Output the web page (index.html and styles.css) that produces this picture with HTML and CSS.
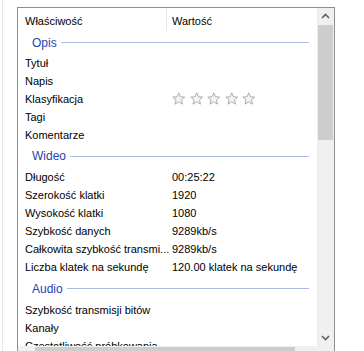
FILE: index.html
```html
<!DOCTYPE html>
<html lang="pl">
<head>
<meta charset="utf-8">
<link rel="stylesheet" href="styles.css">
</head>
<body>
<div class="page">
  <div class="edge"></div>
  <div class="listview">
    <div class="content">
      <div class="colheader">
        <div class="col-name">Właściwość</div>
        <div class="col-value">Wartość</div>
      </div>
      <div class="group"><span class="group-title">Opis</span><span class="group-line"></span></div>
      <div class="row"><div class="name">Tytuł</div><div class="value"></div></div>
      <div class="row"><div class="name">Napis</div><div class="value"></div></div>
      <div class="row"><div class="name">Klasyfikacja</div>
        <div class="value stars">
          <svg class="star" viewBox="0 0 13 13"><path d="M6.5 0.8 L8.1 4.6 L12.2 4.9 L9.1 7.6 L10.1 11.7 L6.5 9.5 L2.9 11.7 L3.9 7.6 L0.8 4.9 L4.9 4.6 Z"/></svg>
          <svg class="star" viewBox="0 0 13 13"><path d="M6.5 0.8 L8.1 4.6 L12.2 4.9 L9.1 7.6 L10.1 11.7 L6.5 9.5 L2.9 11.7 L3.9 7.6 L0.8 4.9 L4.9 4.6 Z"/></svg>
          <svg class="star" viewBox="0 0 13 13"><path d="M6.5 0.8 L8.1 4.6 L12.2 4.9 L9.1 7.6 L10.1 11.7 L6.5 9.5 L2.9 11.7 L3.9 7.6 L0.8 4.9 L4.9 4.6 Z"/></svg>
          <svg class="star" viewBox="0 0 13 13"><path d="M6.5 0.8 L8.1 4.6 L12.2 4.9 L9.1 7.6 L10.1 11.7 L6.5 9.5 L2.9 11.7 L3.9 7.6 L0.8 4.9 L4.9 4.6 Z"/></svg>
          <svg class="star" viewBox="0 0 13 13"><path d="M6.5 0.8 L8.1 4.6 L12.2 4.9 L9.1 7.6 L10.1 11.7 L6.5 9.5 L2.9 11.7 L3.9 7.6 L0.8 4.9 L4.9 4.6 Z"/></svg>
        </div>
      </div>
      <div class="row"><div class="name">Tagi</div><div class="value"></div></div>
      <div class="row"><div class="name">Komentarze</div><div class="value"></div></div>
      <div class="group group-mid"><span class="group-title">Wideo</span><span class="group-line"></span></div>
      <div class="row"><div class="name">Długość</div><div class="value">00:25:22</div></div>
      <div class="row"><div class="name">Szerokość klatki</div><div class="value">1920</div></div>
      <div class="row"><div class="name">Wysokość klatki</div><div class="value">1080</div></div>
      <div class="row"><div class="name">Szybkość danych</div><div class="value">9289kb/s</div></div>
      <div class="row"><div class="name">Całkowita szybkość transmi...</div><div class="value">9289kb/s</div></div>
      <div class="row"><div class="name">Liczba klatek na sekundę</div><div class="value">120.00 klatek na sekundę</div></div>
      <div class="group group-tall"><span class="group-title">Audio</span><span class="group-line"></span></div>
      <div class="row"><div class="name">Szybkość transmisji bitów</div><div class="value"></div></div>
      <div class="row"><div class="name">Kanały</div><div class="value"></div></div>
      <div class="row"><div class="name">Częstotliwość próbkowania</div><div class="value"></div></div>
    </div>
    <div class="vscroll">
      <div class="sbtn"><svg viewBox="0 0 17 17" class="chev"><path d="M5 10 L8.5 6.5 L12 10"/></svg></div>
      <div class="vthumb"></div>
      <div class="vtrack"></div>
      <div class="sbtn"><svg viewBox="0 0 17 17" class="chev"><path d="M5 7 L8.5 10.5 L12 7"/></svg></div>
    </div>
    <div class="hscroll">
      <div class="hbtn"></div>
      <div class="hthumb"></div>
      <div class="htrack"></div>
    </div>
    <div class="corner"></div>
  </div>
</div>
</body>
</html>
```
FILE: styles.css
```css
html, body {
  margin: 0;
  padding: 0;
  background: #ffffff;
  overflow: hidden;
}
body {
  width: 364px;
  height: 351px;
  font-family: "Liberation Sans", Arial, sans-serif;
  font-size: 11px;
  color: #000000;
}
.page {
  display: flex;
  height: 351px;
}
.edge {
  width: 1px;
  margin-left: 2px;
  background: #e6e6e6;
  flex: none;
}
.listview {
  margin-left: 14px;
  margin-top: 7px;
  width: 318px;
  height: 360px;
  border: 1px solid #8c8f94;
  box-sizing: border-box;
  display: grid;
  grid-template-columns: 299px 17px;
  grid-template-rows: 338px 17px;
  flex: none;
}
.content {
  overflow: hidden;
  background: #ffffff;
}
.colheader {
  display: flex;
  height: 23px;
  align-items: stretch;
}
.col-name {
  width: 141px;
  padding-left: 7px;
  border-right: 1px solid #e5e5e5;
  line-height: 20px;
  padding-top: 3px;
}
.col-value {
  padding-left: 5px;
  line-height: 20px;
  padding-top: 3px;
}
.group {
  height: 23px;
  display: flex;
  align-items: center;
  padding-left: 14px;
  padding-right: 8px;
}
.group-mid {
  height: 24px;
}
.group-tall {
  height: 25px;
}
.group-title {
  color: #1e3fb0;
  font-size: 12px;
  line-height: 16px;
}
.group-line {
  flex: 1;
  height: 1px;
  background: #a9bde2;
  margin-left: 4px;
}
.row {
  display: flex;
  height: 18px;
  line-height: 18px;
}
.name {
  width: 147px;
  padding-left: 7px;
  white-space: nowrap;
  overflow: hidden;
}
.value {
  white-space: nowrap;
}
.stars {
  display: flex;
  align-items: center;
  gap: 4px;
}
.star {
  width: 13.5px;
  height: 13.5px;
  fill: #f4f4f4;
  stroke: #a8a8a8;
  stroke-width: 0.9;
  stroke-linejoin: round;
}
.vscroll {
  background: #f0f0f0;
  display: flex;
  flex-direction: column;
}
.sbtn {
  height: 17px;
  flex: none;
}
.chev {
  width: 17px;
  height: 17px;
  display: block;
  fill: none;
  stroke: #606060;
  stroke-width: 1.6;
}
.vthumb {
  height: 115px;
  margin: 0 1px;
  background: #cdcdcd;
  flex: none;
}
.vtrack {
  flex: 1;
}
.hscroll {
  background: #f0f0f0;
  display: flex;
}
.hbtn {
  width: 17px;
  flex: none;
}
.hthumb {
  width: 260px;
  margin: 1px 0;
  background: #cdcdcd;
  flex: none;
}
.htrack {
  flex: 1;
}
.corner {
  background: #f0f0f0;
}
```
